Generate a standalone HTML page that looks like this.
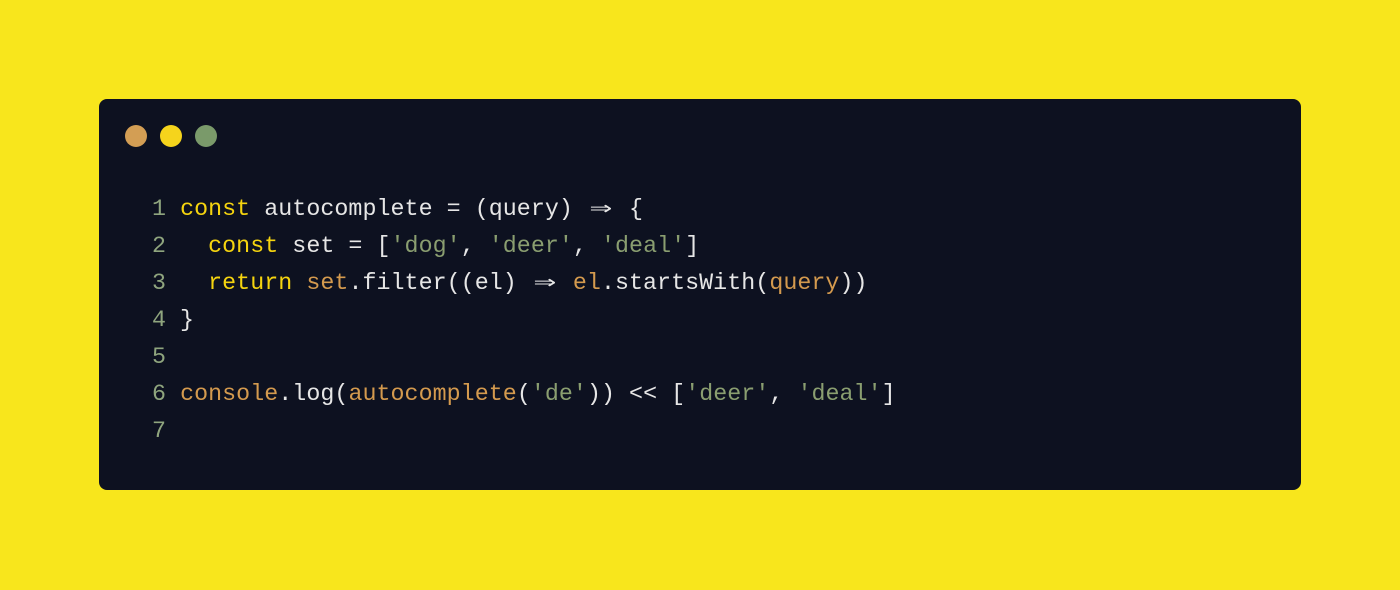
<!DOCTYPE html>
<html><head><meta charset="utf-8"><style>
html,body{margin:0;padding:0}
body{width:1400px;height:590px;background:#f8e61c;position:relative;overflow:hidden}
.card{position:absolute;left:99px;top:99px;width:1202px;height:391px;background:#0d1120;border-radius:8px}
.dot{position:absolute;top:125px;width:22px;height:22px;border-radius:50%}
pre{position:absolute;left:152px;top:191px;margin:0;font-family:"Liberation Mono",monospace;font-size:23.3px;line-height:37px;color:#e6e6e6;letter-spacing:0.05px}
.n{color:#8fa57e}.k{color:#f5d40f}.s{color:#8a9e70}.o{color:#d49a4e}
.a{display:inline-block;width:28px;text-align:center;transform:scaleX(1.6)}
</style></head><body>
<div class="card"></div>
<div class="dot" style="left:125px;background:#d39e54"></div>
<div class="dot" style="left:160px;background:#f5d41c"></div>
<div class="dot" style="left:195px;background:#7a9a6a"></div>
<pre><span class="n">1</span> <span class="k">const</span> autocomplete = (query) <span class="a">⇒</span> {
<span class="n">2</span>   <span class="k">const</span> set = [<span class="s">'dog'</span>, <span class="s">'deer'</span>, <span class="s">'deal'</span>]
<span class="n">3</span>   <span class="k">return</span> <span class="o">set</span>.filter((el) <span class="a">⇒</span> <span class="o">el</span>.startsWith(<span class="o">query</span>))
<span class="n">4</span> }
<span class="n">5</span>
<span class="n">6</span> <span class="o">console</span>.log(<span class="o">autocomplete</span>(<span class="s">'de'</span>)) &lt;&lt; [<span class="s">'deer'</span>, <span class="s">'deal'</span>]
<span class="n">7</span></pre>
</body></html>
